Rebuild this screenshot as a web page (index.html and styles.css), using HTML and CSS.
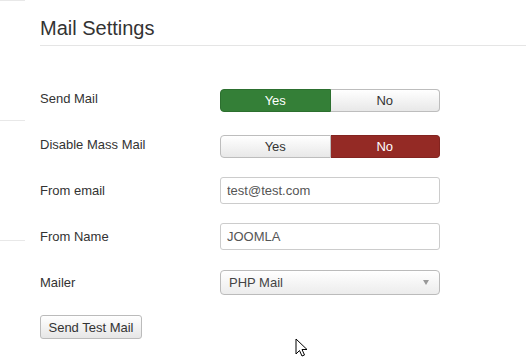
FILE: index.html
```html
<!DOCTYPE html>
<html lang="en">
<head>
    <meta charset="UTF-8">
    <title>Mail Settings</title>
    <link rel="stylesheet" href="styles.css">
</head>
<body>
    <div class="page">
        <div class="sidebar">
            <div class="side-item"></div>
            <div class="side-item"></div>
        </div>
        <div class="content">
            <h2>Mail Settings</h2>
            <div class="form">
                <div class="row">
                    <label>Send Mail</label>
                    <div class="toggle">
                        <span class="opt yes active">Yes</span>
                        <span class="opt no">No</span>
                    </div>
                </div>
                <div class="row">
                    <label>Disable Mass Mail</label>
                    <div class="toggle">
                        <span class="opt yes">Yes</span>
                        <span class="opt no active">No</span>
                    </div>
                </div>
                <div class="row">
                    <label for="fromEmail">From email</label>
                    <input type="text" id="fromEmail" value="test@test.com">
                </div>
                <div class="row">
                    <label for="fromName">From Name</label>
                    <input type="text" id="fromName" value="JOOMLA">
                </div>
                <div class="row">
                    <label>Mailer</label>
                    <div class="select">
                        <span>PHP Mail</span>
                        <span class="arrow"></span>
                    </div>
                </div>
                <button class="btn">Send Test Mail</button>
            </div>
        </div>
    </div>

    <svg class="cursor" width="14" height="20" viewBox="0 0 14 20">
        <path d="M1 1 L1 16 L4.5 12.5 L7 18 L9.5 17 L7 11.5 L12 11.5 Z" fill="#fff" stroke="#000" stroke-width="1" stroke-linejoin="round"/>
    </svg>
</body>
</html>
```

FILE: styles.css
```css
body {
    font-family: 'Liberation Sans', Arial, sans-serif;
    background-color: #ffffff;
    color: #333;
    margin: 0;
    font-size: 13px;
}
.page {
    display: flex;
    min-height: 357px;
}
.sidebar {
    width: 25px;
    flex-shrink: 0;
    border-top: 1px solid #e8e8e8;
}
.side-item {
    height: 119px;
    border-bottom: 1px solid #e8e8e8;
}
.content {
    flex: 1;
    padding-left: 15px;
}
h2 {
    font-size: 20px;
    font-weight: normal;
    line-height: 24px;
    margin: 0;
    padding: 16px 0 5px;
    border-bottom: 1px solid #e5e5e5;
    color: #333;
}
.form {
    margin-top: 29px;
}
.row {
    display: flex;
    align-items: center;
    height: 46px;
}
.row label {
    width: 180px;
    flex-shrink: 0;
}
.toggle {
    display: flex;
    width: 220px;
    height: 23px;
    margin-top: 4px;
}
.opt {
    flex: 1;
    display: flex;
    align-items: center;
    justify-content: center;
    background: linear-gradient(#ffffff, #e8e8e8);
    border: 1px solid #bdbdbd;
    color: #333;
}
.opt.yes {
    border-radius: 4px 0 0 4px;
}
.opt.no {
    border-radius: 0 4px 4px 0;
    border-left: none;
}
.opt.yes.active {
    background: #347f37;
    border-color: #2c6f2f;
    color: #fff;
}
.opt.no.active {
    background: #942a25;
    border-color: #832420;
    color: #fff;
}
.row input {
    width: 220px;
    height: 27px;
    box-sizing: border-box;
    border: 1px solid #ccc;
    border-radius: 3px;
    padding: 0 6px;
    font-family: inherit;
    font-size: 13px;
    color: #555;
    outline: none;
}
.select {
    width: 220px;
    height: 25px;
    box-sizing: border-box;
    display: flex;
    align-items: center;
    justify-content: space-between;
    padding: 0 10px 0 8px;
    border: 1px solid #bbb;
    border-radius: 4px;
    background: linear-gradient(#ffffff, #ececec);
    color: #444;
}
.arrow {
    width: 0;
    height: 0;
    border-left: 3px solid transparent;
    border-right: 3px solid transparent;
    border-top: 5px solid #999;
}
.btn {
    margin-top: 10px;
    width: 102px;
    height: 24px;
    padding: 0;
    font-family: inherit;
    font-size: 13px;
    color: #333;
    background: linear-gradient(#ffffff, #e6e6e6);
    border: 1px solid #bbb;
    border-radius: 3px;
}
.cursor {
    position: absolute;
    left: 295px;
    top: 338px;
}
```
